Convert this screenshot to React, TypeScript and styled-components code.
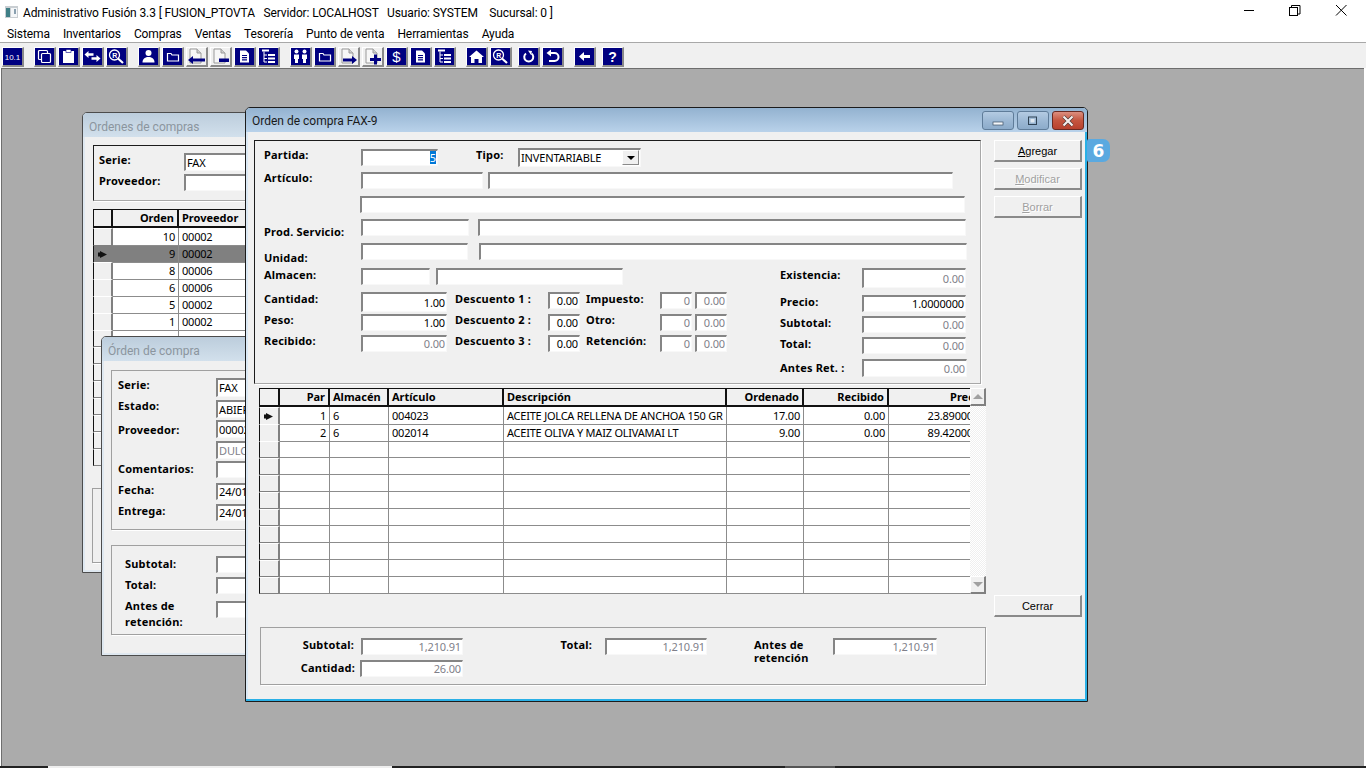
import React from 'react'
import styled, { createGlobalStyle } from 'styled-components'

const FONT = '"Noto Sans", Tahoma, sans-serif'
const CHROME_FONT = 'Roboto, "Noto Sans", sans-serif'

const GlobalStyle = createGlobalStyle`
  html, body {
    margin: 0;
    padding: 0;
    overflow: hidden;
    background: #fff;
  }
  * {
    box-sizing: border-box;
  }
`

const Shell = styled.div`
  width: 1366px;
  height: 768px;
  display: flex;
  flex-direction: column;
  font-family: ${FONT};
  font-size: 11px;
  color: #000;
  background: #fff;
`

const TitleBar = styled.div`
  height: 21px;
  background: #fff;
  display: flex;
  align-items: center;
  padding: 0 2px 0 5px;
  font-family: ${CHROME_FONT};
  font-size: 12px;
  letter-spacing: -0.12px;
  white-space: pre;
`

const AppIcon = styled.svg`
  margin-top: 2px;
  flex: none;
`

const AppTitle = styled.span`
  margin: 4px 0 0 5px;
  flex: 1;
`

const CaptionGlyph = styled.svg`
  width: 46px;
  height: 21px;
  flex: none;
`

const MenuBar = styled.div`
  height: 22px;
  background: #fff;
  border-bottom: 1px solid #a8a8a8;
  display: flex;
  align-items: center;
  gap: 13px;
  padding: 4px 0 0 7px;
  font-family: ${CHROME_FONT};
  font-size: 12px;
  letter-spacing: -0.1px;
`

const Toolbar = styled.div`
  height: 25px;
  background: #f0f0f0;
  display: flex;
  align-items: flex-start;
  padding: 4px 0 0 1px;
`

const ToolButton = styled.div<{ $gap?: number }>`
  width: 22px;
  height: 20px;
  margin: 0 1px 0 ${(p) => 1 + (p.$gap ?? 0)}px;
  border-style: solid;
  border-width: 1px 2px 2px 1px;
  border-color: #fff #8a8a8a #8a8a8a #fff;
  background: #f0f0f0;
  display: flex;
  flex: none;

  svg {
    width: 19px;
    height: 17px;
  }
`

const Desktop = styled.div`
  flex: 1;
  position: relative;
  background: #ababab;
  border-top: 1px solid #6e6e6e;
  border-left: 1px solid #6e6e6e;
  margin-left: 1px;
  margin-right: 2px;
  overflow: hidden;
`

const Taskbar = styled.div`
  height: 2px;
  background: #222;
  display: flex;
`

const TaskSlot = styled.div<{ $w: number; $ml: number; $bg: string }>`
  width: ${(p) => p.$w}px;
  margin-left: ${(p) => p.$ml}px;
  background: ${(p) => p.$bg};
`

const Frame = styled.div<{ $left: number; $top: number; $w: number; $h: number; $active?: boolean }>`
  position: absolute;
  left: ${(p) => p.$left}px;
  top: ${(p) => p.$top}px;
  width: ${(p) => p.$w}px;
  height: ${(p) => p.$h}px;
  border: 1px solid ${(p) => (p.$active ? '#1c1c1c' : '#4c4c4c')};
  border-radius: 5px 5px 0 0;
  background: #f0f0f0;
  overflow: hidden;
  display: flex;
  flex-direction: column;
  box-shadow: inset ${(p) => (p.$active ? '-2px -2px 0 #2ab0e6, inset 2px 0 0 #dbe9f5' : '2px -2px 0 #dfe8f0')};
`

const Caption = styled.div<{ $active?: boolean }>`
  height: 24px;
  flex: none;
  display: flex;
  align-items: center;
  padding: ${(p) => (p.$active ? 2 : 4)}px 0 0 6px;
  font-family: ${CHROME_FONT};
  font-size: 12px;
  color: ${(p) => (p.$active ? '#1a1a1a' : '#8b959e')};
  background: ${(p) =>
    p.$active
      ? 'linear-gradient(#93b2d0, #b9d2ea)'
      : 'linear-gradient(#bccddc, #d2e0ec)'};
`

const CaptionTitle = styled.span`
  flex: 1;
`

const WinButtons = styled.div`
  display: flex;
  gap: 3px;
  margin: -1px 3px 0 0;
`

const WinButton = styled.div<{ $close?: boolean }>`
  width: 32px;
  height: 19px;
  border: 1px solid ${(p) => (p.$close ? '#6a2a22' : '#5f7c99')};
  border-radius: 3px;
  background: ${(p) =>
    p.$close
      ? 'linear-gradient(#dc8f80 0, #c4553f 50%, #b8402d 100%)'
      : 'linear-gradient(#b4cbe2 0, #9db9d5 50%, #8cabca 100%)'};
  display: flex;
  align-items: center;
  justify-content: center;

  svg {
    width: 16px;
    height: 12px;
  }
`

const MainBody = styled.div`
  flex: 1;
  display: flex;
  gap: 13px;
  padding: 8px 0 0 8px;
`

const LeftCol = styled.div`
  width: 727px;
  flex: none;
`

const SideCol = styled.div`
  width: 88px;
  flex: none;
  display: flex;
  flex-direction: column;
  gap: 6px;
`

const Button = styled.div<{ $disabled?: boolean; $mt?: number }>`
  height: 22px;
  margin-top: ${(p) => p.$mt ?? 0}px;
  border-style: solid;
  border-width: 1px 2px 2px 1px;
  border-color: #fff #8a8a8a #8a8a8a #fff;
  display: flex;
  align-items: center;
  justify-content: center;
  font-family: "Liberation Sans", sans-serif;
  color: ${(p) => (p.$disabled ? '#a0a0a0' : '#000')};
  text-shadow: ${(p) => (p.$disabled ? '1px 1px 0 #fff' : 'none')};

  u {
    text-underline-offset: 1px;
  }
`

const Badge = styled.div`
  position: absolute;
  left: 1085px;
  top: 70px;
  width: 23px;
  height: 23px;
  padding-top: 1px;
  border-radius: 2px 7px 7px 2px;
  background: #5aa9e0;
  color: #fff;
  font-family: "DejaVu Sans", sans-serif;
  font-weight: 700;
  font-size: 17px;
  display: flex;
  align-items: center;
  justify-content: center;
`

const FormPanel = styled.div`
  height: 244px;
  border-style: solid;
  border-width: 1px;
  border-color: #1c1c1c #a8a8a8 #a8a8a8 #1c1c1c;
  box-shadow: 1px 1px 0 #fff;
  padding: 7px 0 0 9px;
`

const Row = styled.div<{ $h: number }>`
  height: ${(p) => p.$h}px;
  display: flex;
  align-items: flex-start;
`

const Label = styled.div<{ $w?: number; $mt?: number; $ml?: number; $right?: boolean; $lh?: number }>`
  width: ${(p) => (p.$w ? `${p.$w}px` : 'auto')};
  flex: none;
  margin-top: ${(p) => p.$mt ?? 0}px;
  margin-left: ${(p) => p.$ml ?? 0}px;
  font-weight: 700;
  letter-spacing: 0.2px;
  line-height: ${(p) => p.$lh ?? 13}px;
  text-align: ${(p) => (p.$right ? 'right' : 'left')};
  white-space: nowrap;
`

const Field = styled.div<{ $w: number; $h?: number; $ml?: number; $mt?: number; $right?: boolean; $muted?: boolean }>`
  width: ${(p) => p.$w}px;
  height: ${(p) => p.$h ?? 17}px;
  flex: none;
  margin-left: ${(p) => p.$ml ?? 0}px;
  margin-top: ${(p) => p.$mt ?? 0}px;
  border-style: solid;
  border-width: 2px 1px 1px 2px;
  border-color: #858585 #f8f8f8 #f8f8f8 #858585;
  background: #fff;
  display: flex;
  align-items: center;
  justify-content: ${(p) => (p.$right ? 'flex-end' : 'flex-start')};
  padding: 0 1px 1px;
  color: ${(p) => (p.$muted ? '#7f7f8a' : '#000')};
  letter-spacing: -0.15px;
  line-height: 13px;
  white-space: nowrap;
  overflow: hidden;
`

const Selected = styled.span`
  background: #0078d7;
  color: #fff;
`

const SelectArrow = styled.div`
  width: 17px;
  height: 15px;
  margin-left: auto;
  background: #f0f0f0;
  border-style: solid;
  border-width: 1px;
  border-color: #fff #8a8a8a #8a8a8a #fff;
  display: flex;
  align-items: center;
  justify-content: center;

  &::after {
    content: '';
    border-style: solid;
    border-width: 4px 4px 0 4px;
    border-color: #000 transparent transparent transparent;
  }
`

const Lower = styled.div`
  display: flex;
`

const LowerLeft = styled.div`
  width: 516px;
  flex: none;
`

const GridView = styled.div`
  width: 727px;
  height: 206px;
  margin: 4px 0 0 5px;
  display: flex;
`

const TableArea = styled.div<{ $w?: number }>`
  width: ${(p) => (p.$w ? `${p.$w}px` : 'auto')};
  flex: none;
  overflow: hidden;
`

const GridRow = styled.div<{ $cols: string; $selected?: boolean }>`
  display: grid;
  grid-template-columns: ${(p) => p.$cols};
  height: 17px;
  background: ${(p) => (p.$selected ? '#808080' : '#fff')};
`

const HeadRow = styled(GridRow)`
  height: 19px;
  background: #f0f0f0;
`

const Corner = styled.div`
  border-style: solid;
  border-width: 1px 2px 2px 1px;
  border-color: #111;
  background: #f0f0f0;
`

const HeadCell = styled.div<{ $right?: boolean }>`
  border-style: solid;
  border-width: 1px 2px 2px 0;
  border-color: #111;
  font-weight: 700;
  line-height: 15px;
  padding: 0 3px;
  text-align: ${(p) => (p.$right ? 'right' : 'left')};
  white-space: nowrap;
`

const Indicator = styled.div<{ $selected?: boolean }>`
  border-style: solid;
  border-width: 1px 2px 1px 1px;
  border-color: ${(p) => (p.$selected ? '#808080 #808080 #808080 #111' : '#fff #808080 #808080 #111')};
  background: ${(p) => (p.$selected ? '#808080' : '#f0f0f0')};
  display: flex;
  align-items: center;
  padding-left: 4px;

  svg {
    width: 9px;
    height: 7px;
  }
`

const DataCell = styled.div<{ $right?: boolean }>`
  border-style: solid;
  border-width: 0 1px 1px 0;
  border-color: #8c8c8c;
  line-height: 17px;
  padding: 0 3px;
  letter-spacing: -0.22px;
  text-align: ${(p) => (p.$right ? 'right' : 'left')};
  white-space: nowrap;
`

const ScrollBar = styled.div`
  width: 16px;
  flex: none;
  display: flex;
  flex-direction: column;
  background: repeating-conic-gradient(#efefef 0 25%, #fff 0 50%) 0 0 / 2px 2px;
`

const ScrollArrow = styled.div<{ $down?: boolean }>`
  height: 18px;
  background: #f0f0f0;
  border-style: solid;
  border-width: 1px 2px 2px 1px;
  border-color: #fff #808080 #808080 #fff;
  display: flex;
  align-items: center;
  justify-content: center;

  &::after {
    content: '';
    border-style: solid;
    border-width: ${(p) => (p.$down ? '5px 5px 0 5px' : '0 5px 5px 5px')};
    border-color: ${(p) =>
      p.$down
        ? '#a0a0a0 transparent transparent transparent'
        : 'transparent transparent #a0a0a0 transparent'};
  }
`

const ScrollTrack = styled.div`
  flex: 1;
`

const Summary = styled.div`
  width: 726px;
  height: 58px;
  margin: 33px 0 0 6px;
  border: 1px solid #a0a0a0;
  box-shadow: 1px 1px 0 #fff;
  padding-top: 10px;
  display: flex;
`

const SummaryCol = styled.div<{ $ml?: number }>`
  margin-left: ${(p) => p.$ml ?? 0}px;
`

const SoftPanel = styled.div<{ $h: number; $mt?: number; $ml?: number; $pl?: number; $pt?: number; $dark?: boolean }>`
  width: 260px;
  height: ${(p) => p.$h}px;
  flex: none;
  margin-top: ${(p) => p.$mt ?? 0}px;
  margin-left: ${(p) => p.$ml ?? 0}px;
  padding: ${(p) => p.$pt ?? 0}px 0 0 ${(p) => p.$pl ?? 0}px;
  border: 1px solid;
  border-color: ${(p) => (p.$dark ? '#1c1c1c #a8a8a8 #a8a8a8 #1c1c1c' : '#a0a0a0')};
  box-shadow: 1px 1px 0 #fff;
`

const MiniGrid = styled.div`
  margin: 8px 0 0 10px;
`

const Triangle = () => (
  <svg viewBox="0 0 9 7">
    <path d="M0 1.500h2V0l7 3.500L2 7V5.500H0z" fill="#111" />
  </svg>
)

const navy = '#000080'
const W = '#fff'

const Navy = ({ children }: { children?: React.ReactNode }) => (
  <svg viewBox="0 0 19 17">
    <rect width="19" height="17" fill={navy} />
    {children}
  </svg>
)

const Paper = ({ children }: { children?: React.ReactNode }) => (
  <svg viewBox="0 0 19 17">
    <path d="M3 1h7l4 4v10H3z" fill="#f7f7f7" stroke="#9a9a9a" />
    <path d="M10 1v4h4" fill="#cfcfcf" stroke="#9a9a9a" />
    {children}
  </svg>
)

const Lens = () => (
  <>
    <circle cx="7.500" cy="7" r="5" fill="none" stroke={W} strokeWidth="1.300" />
    <text x="5.200" y="9.600" fontSize="7" fontWeight="700" fill={W} fontFamily="Liberation Sans">R</text>
    <path d="M11 10.500l5 4.500" stroke={W} strokeWidth="2.200" />
  </>
)

const Folder = () => (
  <path d="M4.500 5.500h3.500l1 1.500h6.500v6h-11z" fill="none" stroke={W} strokeWidth="1.200" />
)

const DocLines = () => (
  <>
    <path d="M5 2.500h6l3 3v9H5z" fill={W} />
    <path d="M7 7.500h5M7 9.700h5M7 11.900h5" stroke={navy} strokeWidth="1.200" />
  </>
)

const Tree = () => (
  <>
    <rect x="3" y="1.500" width="7" height="2" fill={W} />
    <path d="M5 3.500v10.500M5 7h3M5 10.500h3M5 14h3" stroke={W} strokeWidth="1" fill="none" />
    <path d="M9 7h7M9 10.500h7M9 14h7" stroke={W} strokeWidth="1.800" />
  </>
)

type Tool = { gap?: number; icon: React.ReactNode }

const tools: Tool[] = [
  {
    icon: (
      <Navy>
        <text x="9.500" y="11.500" fontSize="8" textAnchor="middle" fill={W} fontFamily="Liberation Sans">10.1</text>
      </Navy>
    ),
  },
  {
    gap: 8,
    icon: (
      <Navy>
        <rect x="3.500" y="2.500" width="9" height="9" rx="1" fill="none" stroke={W} strokeWidth="1.200" />
        <rect x="6.500" y="5.500" width="9" height="9" rx="1" fill={navy} stroke={W} strokeWidth="1.200" />
      </Navy>
    ),
  },
  {
    icon: (
      <Navy>
        <rect x="4" y="3" width="11" height="12" fill={W} />
        <rect x="7" y="1.500" width="5" height="3" fill={W} stroke={navy} strokeWidth=".6" />
      </Navy>
    ),
  },
  {
    icon: (
      <Navy>
        <path d="M1.500 6.500l4-3.500v2.200h5v2.600h-5V10zM17.500 10.500l-4-3.500v2.200h-5v2.600h5V14z" fill={W} />
      </Navy>
    ),
  },
  { icon: <Navy><Lens /></Navy> },
  {
    gap: 8,
    icon: (
      <Navy>
        <circle cx="9.500" cy="5" r="3" fill={W} />
        <path d="M3.500 14.500c0-4 3-5.500 6-5.500s6 1.500 6 5.500z" fill={W} />
      </Navy>
    ),
  },
  { icon: <Navy><Folder /></Navy> },
  { icon: <Paper><path d="M1 12l5-4v2.500h12v3H6V16z" fill={navy} /></Paper> },
  { icon: <Paper><rect x="8" y="10.500" width="10" height="3.500" fill={navy} /></Paper> },
  { icon: <Navy><DocLines /></Navy> },
  { icon: <Navy><Tree /></Navy> },
  {
    gap: 8,
    icon: (
      <Navy>
        <circle cx="5.500" cy="3.500" r="2" fill={W} />
        <path d="M3 6.500h5v4.500H7v4H4v-4H3z" fill={W} />
        <circle cx="13.500" cy="3.500" r="2" fill={W} />
        <path d="M11 6.500h5v4.500h-1v4h-3v-4h-1z" fill={W} />
      </Navy>
    ),
  },
  { icon: <Navy><Folder /></Navy> },
  { icon: <Paper><path d="M18 12l-5-4v2.500H4v3h9V16z" fill={navy} /></Paper> },
  { icon: <Paper><path d="M11 6.500h3v3.500h4v3h-4v3.500h-3V13H7v-3h4z" fill={navy} /></Paper> },
  {
    icon: (
      <Navy>
        <text x="9.500" y="14" fontSize="15" textAnchor="middle" fill={W} fontFamily="Liberation Sans">$</text>
      </Navy>
    ),
  },
  { icon: <Navy><DocLines /></Navy> },
  { icon: <Navy><Tree /></Navy> },
  {
    gap: 8,
    icon: (
      <Navy>
        <path d="M9.500 2.500l7.500 6.500h-2v6h-3.500v-4h-4v4H4V9H2z" fill={W} />
      </Navy>
    ),
  },
  { icon: <Navy><Lens /></Navy> },
  {
    gap: 4,
    icon: (
      <Navy>
        <path d="M7 5.500a4.500 4.500 0 1 0 5.500 0" fill="none" stroke={W} strokeWidth="2" />
        <path d="M9 2.500l4 .5-1 4z" fill={W} />
      </Navy>
    ),
  },
  {
    icon: (
      <Navy>
        <path d="M7 5h4.500a3.500 3.500 0 0 1 0 8H6" fill="none" stroke={W} strokeWidth="2" />
        <path d="M8 1.500v7L3.500 5z" fill={W} />
      </Navy>
    ),
  },
  {
    gap: 8,
    icon: (
      <Navy>
        <path d="M4 8.500l5-4.500v3h6v3H9v3z" fill={W} />
      </Navy>
    ),
  },
  {
    gap: 4,
    icon: (
      <Navy>
        <text x="9.500" y="14" fontSize="14" fontWeight="700" textAnchor="middle" fill={W} fontFamily="Liberation Sans">?</text>
      </Navy>
    ),
  },
]

const menus = ['Sistema', 'Inventarios', 'Compras', 'Ventas', 'Tesorería', 'Punto de venta', 'Herramientas', 'Ayuda']

const orderCols = '20px 66px 120px'
const orders = [
  ['10', '00002'],
  ['9', '00002'],
  ['8', '00006'],
  ['6', '00006'],
  ['5', '00002'],
  ['1', '00002'],
  ...Array.from({ length: 8 }, () => ['', '']),
]

const lineCols = '21px 50px 59px 115px 223px 77px 85px 100px'
const lines = [
  ['1', '6', '004023', 'ACEITE JOLCA RELLENA DE ANCHOA 150 GR', '17.00', '0.00', '23.8900000'],
  ['2', '6', '002014', 'ACEITE OLIVA Y MAIZ OLIVAMAI LT', '9.00', '0.00', '89.4200000'],
  ...Array.from({ length: 9 }, () => ['', '', '', '', '', '', '']),
]

const rightLine = [true, false, false, false, true, true, true]

const amounts = [
  { name: 'Cantidad:', value: '1.00', discount: 'Descuento 1 :', tax: 'Impuesto:', mt: 0 },
  { name: 'Peso:', value: '1.00', discount: 'Descuento 2 :', tax: 'Otro:', mt: -1 },
  { name: 'Recibido:', value: '0.00', discount: 'Descuento 3 :', tax: 'Retención:', mt: -1 },
]

const App: React.FC = () => {
  return (
    <Shell>
      <GlobalStyle />
      <TitleBar>
        <AppIcon width="13" height="12" viewBox="0 0 13 12">
          <rect width="13" height="12" fill="#c9ced2" />
          <rect x="1" y="2" width="4" height="9" fill="#3f7f86" />
          <rect x="6" y="2" width="6" height="9" fill="#f4f6f8" />
          <rect x="9" y="3" width="2" height="5" fill="#8aa0b0" />
        </AppIcon>
        <AppTitle>{'Administrativo Fusión 3.3 [ FUSION_PTOVTA   Servidor: LOCALHOST   Usuario: SYSTEM    Sucursal: 0 ]'}</AppTitle>
        <CaptionGlyph viewBox="0 0 46 21">
          <path d="M18 10.500h10" stroke="#000" />
        </CaptionGlyph>
        <CaptionGlyph viewBox="0 0 46 21">
          <path d="M19.500 7.500v-2h8.500v8.500h-2.500" fill="none" stroke="#000" />
          <rect x="17.500" y="7.500" width="8" height="8" fill="#fff" stroke="#000" />
        </CaptionGlyph>
        <CaptionGlyph viewBox="0 0 46 21">
          <path d="M18 5l10.500 10.500M28.500 5L18 15.500" stroke="#000" />
        </CaptionGlyph>
      </TitleBar>
      <MenuBar>
        {menus.map((m) => (
          <span key={m}>{m}</span>
        ))}
      </MenuBar>
      <Toolbar>
        {tools.map((t, i) => (
          <ToolButton key={i} $gap={t.gap}>
            {t.icon}
          </ToolButton>
        ))}
      </Toolbar>
      <Desktop>
        <Frame $left={80} $top={43} $w={300} $h={461}>
          <Caption>
            <CaptionTitle>Ordenes de compras</CaptionTitle>
          </Caption>
          <SoftPanel $dark $h={56} $mt={8} $ml={10} $pl={5} $pt={7}>
            <Row $h={21}>
              <Label $w={85}>Serie:</Label>
              <Field $w={70} $h={18}>FAX</Field>
            </Row>
            <Row $h={21}>
              <Label $w={85}>Proveedor:</Label>
              <Field $w={70}></Field>
            </Row>
          </SoftPanel>
          <MiniGrid>
            <HeadRow $cols={orderCols}>
              <Corner />
              <HeadCell $right>Orden</HeadCell>
              <HeadCell>Proveedor</HeadCell>
            </HeadRow>
            {orders.map((o, i) => (
              <GridRow key={i} $cols={orderCols} $selected={i === 1}>
                <Indicator $selected={i === 1}>{i === 1 && <Triangle />}</Indicator>
                <DataCell $right>{o[0]}</DataCell>
                <DataCell>{o[1]}</DataCell>
              </GridRow>
            ))}
          </MiniGrid>
          <SoftPanel $h={75} $mt={22} $ml={9} />
        </Frame>
        <Frame $left={99} $top={267} $w={300} $h={320}>
          <Caption>
            <CaptionTitle>Órden de compra</CaptionTitle>
          </Caption>
          <SoftPanel $h={160} $mt={9} $ml={9} $pl={6} $pt={7}>
            <Row $h={22}>
              <Label $w={98}>Serie:</Label>
              <Field $w={70} $h={19}>FAX</Field>
            </Row>
            <Row $h={20}>
              <Label $w={98} $mt={-1}>Estado:</Label>
              <Field $w={70} $h={18}>ABIERTA</Field>
            </Row>
            <Row $h={21}>
              <Label $w={98} $mt={3}>Proveedor:</Label>
              <Field $w={70} $h={18}>00002</Field>
            </Row>
            <Row $h={20}>
              <Label $w={98}></Label>
              <Field $w={70} $h={18} $muted>DULCERIA</Field>
            </Row>
            <Row $h={22}>
              <Label $w={98} $mt={1}>Comentarios:</Label>
              <Field $w={70}></Field>
            </Row>
            <Row $h={21}>
              <Label $w={98}>Fecha:</Label>
              <Field $w={70}>24/01/2020</Field>
            </Row>
            <Row $h={20}>
              <Label $w={98}>Entrega:</Label>
              <Field $w={70}>24/01/2020</Field>
            </Row>
          </SoftPanel>
          <SoftPanel $h={90} $mt={15} $ml={9} $pl={13} $pt={10}>
            <Row $h={21}>
              <Label $w={91} $mt={1}>Subtotal:</Label>
              <Field $w={70}></Field>
            </Row>
            <Row $h={24}>
              <Label $w={91} $mt={1}>Total:</Label>
              <Field $w={70}></Field>
            </Row>
            <Row $h={34}>
              <Label $w={91} $mt={-3} $lh={16}>Antes de<br />retención:</Label>
              <Field $w={70}></Field>
            </Row>
          </SoftPanel>
        </Frame>
        <Frame $left={243} $top={38} $w={843} $h={595} $active>
          <Caption $active>
            <CaptionTitle>Orden de compra FAX-9</CaptionTitle>
            <WinButtons>
              <WinButton>
                <svg viewBox="0 0 16 12">
                  <rect x="3" y="7" width="10" height="3" fill="#f4f7fa" stroke="#3c4f63" strokeWidth=".7" />
                </svg>
              </WinButton>
              <WinButton>
                <svg viewBox="0 0 16 12">
                  <rect x="3.500" y="2" width="8" height="7.500" fill="none" stroke="#2f4254" strokeWidth="1" />
                  <rect x="5.500" y="4" width="4" height="3.500" fill="#dfe8f0" />
                </svg>
              </WinButton>
              <WinButton $close>
                <svg viewBox="0 0 16 12">
                  <path d="M3.500 1.500l9 9M12.500 1.500l-9 9" stroke="#4c3a38" strokeWidth="3.400" />
                  <path d="M3.500 1.500l9 9M12.500 1.500l-9 9" stroke="#f5efee" strokeWidth="2.200" />
                </svg>
              </WinButton>
            </WinButtons>
          </Caption>
          <MainBody>
            <LeftCol>
              <FormPanel>
                <Row $h={24}>
                  <Label $w={97}>Partida:</Label>
                  <Field $w={77} $mt={1} $right>
                    <Selected>5</Selected>
                  </Field>
                  <Label $w={42} $ml={38}>Tipo:</Label>
                  <Field $w={123} $h={19}>
                    INVENTARIABLE
                    <SelectArrow />
                  </Field>
                </Row>
                <Row $h={24}>
                  <Label $w={97} $mt={-1}>Artículo:</Label>
                  <Field $w={122} />
                  <Field $w={465} $ml={5} />
                </Row>
                <Row $h={23}>
                  <Label $w={96}></Label>
                  <Field $w={605} />
                </Row>
                <Row $h={24}>
                  <Label $w={97} $mt={6}>Prod. Servicio:</Label>
                  <Field $w={108} />
                  <Field $w={488} $ml={9} />
                </Row>
                <Row $h={25}>
                  <Label $w={97} $mt={8}>Unidad:</Label>
                  <Field $w={107} />
                  <Field $w={488} $ml={11} />
                </Row>
                <Lower>
                  <LowerLeft>
                    <Row $h={24}>
                      <Label $w={97}>Almacen:</Label>
                      <Field $w={69} />
                      <Field $w={187} $ml={6} />
                    </Row>
                    {amounts.map((a, i) => (
                      <Row key={a.name} $h={i === 0 ? 22 : 21}>
                        <Label $w={97} $mt={a.mt}>{a.name}</Label>
                        <Field $w={86} $h={i === 0 ? 20 : 17} $right $muted={i === 2}>
                          {a.value}
                        </Field>
                        <Label $w={93} $ml={8} $mt={a.mt}>{a.discount}</Label>
                        <Field $w={32} $right>0.00</Field>
                        <Label $w={74} $ml={6} $mt={a.mt}>{a.tax}</Label>
                        <Field $w={32} $right $muted>0</Field>
                        <Field $w={32} $ml={3} $right $muted>0.00</Field>
                      </Row>
                    ))}
                  </LowerLeft>
                  <div>
                    <Row $h={27}>
                      <Label $w={82}>Existencia:</Label>
                      <Field $w={104} $h={20} $right $muted>0.00</Field>
                    </Row>
                    <Row $h={21}>
                      <Label $w={82}>Precio:</Label>
                      <Field $w={104} $right>1.0000000</Field>
                    </Row>
                    <Row $h={21}>
                      <Label $w={82}>Subtotal:</Label>
                      <Field $w={104} $right $muted>0.00</Field>
                    </Row>
                    <Row $h={22}>
                      <Label $w={82}>Total:</Label>
                      <Field $w={104} $right $muted>0.00</Field>
                    </Row>
                    <Row $h={18}>
                      <Label $w={82} $mt={2}>Antes Ret. :</Label>
                      <Field $w={105} $h={18} $right $muted>0.00</Field>
                    </Row>
                  </div>
                </Lower>
              </FormPanel>
              <GridView>
                <TableArea $w={711}>
                  <HeadRow $cols={lineCols}>
                    <Corner />
                    <HeadCell $right>Par</HeadCell>
                    <HeadCell>Almacén</HeadCell>
                    <HeadCell>Artículo</HeadCell>
                    <HeadCell>Descripción</HeadCell>
                    <HeadCell $right>Ordenado</HeadCell>
                    <HeadCell $right>Recibido</HeadCell>
                    <HeadCell $right>Precio</HeadCell>
                  </HeadRow>
                  {lines.map((l, i) => (
                    <GridRow key={i} $cols={lineCols}>
                      <Indicator>{i === 0 && <Triangle />}</Indicator>
                      {l.map((v, j) => (
                        <DataCell key={j} $right={rightLine[j]}>{v}</DataCell>
                      ))}
                    </GridRow>
                  ))}
                </TableArea>
                <ScrollBar>
                  <ScrollArrow />
                  <ScrollTrack />
                  <ScrollArrow $down />
                </ScrollBar>
              </GridView>
              <Summary>
                <SummaryCol>
                  <Row $h={22}>
                    <Label $w={93} $right>Subtotal:</Label>
                    <Field $w={102} $ml={7} $right $muted>1,210.91</Field>
                  </Row>
                  <Row $h={18}>
                    <Label $w={94} $right $mt={1}>Cantidad:</Label>
                    <Field $w={103} $ml={5} $right $muted>26.00</Field>
                  </Row>
                </SummaryCol>
                <SummaryCol $ml={92}>
                  <Row $h={22}>
                    <Label $w={37} $right>Total:</Label>
                    <Field $w={102} $ml={13} $right $muted>1,210.91</Field>
                  </Row>
                </SummaryCol>
                <SummaryCol $ml={47}>
                  <Row $h={30}>
                    <Label $w={79}>Antes de<br />retención</Label>
                    <Field $w={104} $right $muted>1,210.91</Field>
                  </Row>
                </SummaryCol>
              </Summary>
            </LeftCol>
            <SideCol>
              <Button><span><u>A</u>gregar</span></Button>
              <Button $disabled><span><u>M</u>odificar</span></Button>
              <Button $disabled><span><u>B</u>orrar</span></Button>
              <Button $mt={371}>Cerrar</Button>
            </SideCol>
          </MainBody>
        </Frame>
        <Badge>6</Badge>
      </Desktop>
      <Taskbar>
        <TaskSlot $w={344} $ml={48} $bg="#eeeeee" />
        <TaskSlot $w={50} $ml={393} $bg="#555555" />
      </Taskbar>
    </Shell>
  )
}

export default App
